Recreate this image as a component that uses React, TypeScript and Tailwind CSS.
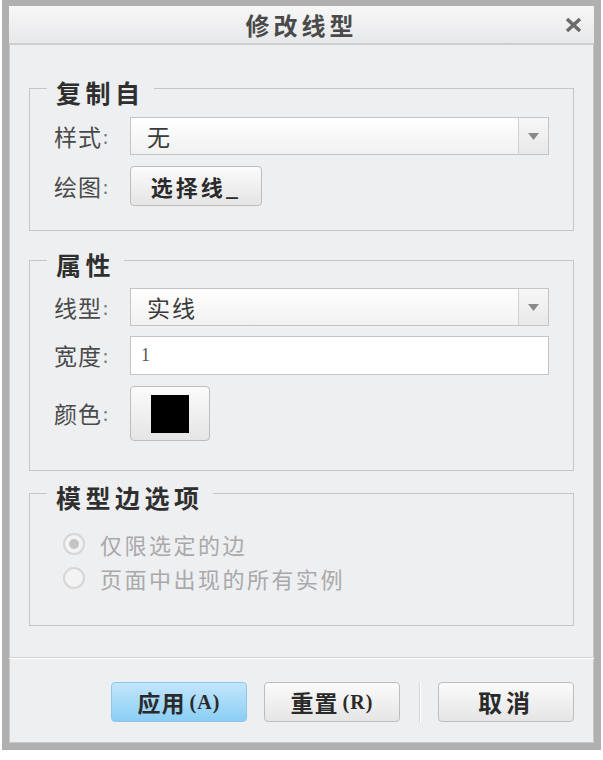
import React from "react";

const font = { fontFamily: '"Noto Sans CJK SC", "Noto Sans", sans-serif' };

function Combo({ value }: { value: string }) {
  return (
    <div className="flex h-[38px] flex-1 border border-[#c4c4c4] bg-gradient-to-b from-[#ffffff] to-[#f1f1f1]">
      <div className="flex flex-1 items-center pl-[16px] text-[23px] tracking-[2px] text-[#3a3a3a]">{value}</div>
      <div className="flex w-[30px] items-center justify-center border-l border-[#d0d0d0] bg-gradient-to-b from-[#f7f7f7] to-[#e8e8e8]">
        <svg width="11" height="7" viewBox="0 0 11 7">
          <path d="M0 0 H11 L5.5 7 Z" fill="#8a8a8a" />
        </svg>
      </div>
    </div>
  );
}

function Label({ children }: { children: React.ReactNode }) {
  return (
    <div className="flex w-[76px] shrink-0 items-center text-[23px] tracking-[1px] text-[#4a4a4a]">
      {children}
      <span className="ml-[1px] text-[18px] text-[#777]">:</span>
    </div>
  );
}

function Group({ title, children, className }: { title: string; children: React.ReactNode; className?: string }) {
  return (
    <fieldset className={"mx-[20px] border border-[#c6c6c6] pl-[24px] pr-[24px] " + (className ?? "")}>
      <legend className="-ml-[7px] px-[9px] pt-[8px] text-[25px] font-bold leading-[26px] tracking-[4.5px] text-[#2f2f2f]">{title}</legend>
      {children}
    </fieldset>
  );
}

function Radio({ checked, label }: { checked?: boolean; label: string }) {
  return (
    <div className="flex h-[34px] items-center">
      <div className="ml-[9px] flex h-[22px] w-[22px] items-center justify-center rounded-full border-2 border-[#d6d6d6] bg-[#f3f3f3]">
        {checked ? <div className="h-[10px] w-[10px] rounded-full bg-[#c4c4c4]" /> : null}
      </div>
      <div className="ml-[15px] text-[22px] tracking-[2.5px] text-[#a9a9a9]">{label}</div>
    </div>
  );
}

const grayBtn =
  "flex items-center justify-center rounded-[4px] border border-[#bdbdbd] bg-gradient-to-b from-[#fbfbfb] to-[#e5e5e5] font-bold text-[#2a2a2a]";

export default function App() {
  return (
    <div className="h-[760px] w-[603px] bg-white" style={font}>
      <div className="ml-[2px] flex h-[750px] w-[599px] flex-col border-[7px] border-t-[6px] border-[#b0b0b0] bg-[#eeeff1] shadow-[inset_0_0_0_1px_#c8c8c8]">
        {/* title bar */}
        <div className="relative flex h-[39px] shrink-0 items-center justify-center border-b-2 border-[#cfcfcf] bg-gradient-to-b from-[#f7f7f7] to-[#e7e8ea]">
          <div className="text-[24px] font-bold tracking-[4px] text-[#4a4a4a]">修改线型</div>
          <div className="absolute right-[12px] top-[11px]">
            <svg width="17" height="16" viewBox="0 0 17 16">
              <path d="M2 2 L15 14 M15 2 L2 14" stroke="#6a6a6a" strokeWidth="3.5" strokeLinecap="butt" />
            </svg>
          </div>
        </div>

        <div className="flex flex-1 flex-col">
          <Group title="复制自" className="mt-[26px] pb-[24px]">
            <div className="mt-[12px] flex items-center">
              <Label>样式</Label>
              <Combo value="无" />
            </div>
            <div className="mt-[11px] flex items-center">
              <Label>绘图</Label>
              <button className={grayBtn + " h-[40px] w-[132px] text-[22px] tracking-[3px]"}>选择线_</button>
            </div>
          </Group>

          <Group title="属性" className="mt-[12px] pb-[29px]">
            <div className="mt-[11px] flex items-center">
              <Label>线型</Label>
              <Combo value="实线" />
            </div>
            <div className="mt-[10px] flex items-center">
              <Label>宽度</Label>
              <div
                className="flex h-[39px] flex-1 items-center border border-[#c4c4c4] bg-white pl-[10px] text-[18px] text-[#555]"
                style={{ fontFamily: '"Liberation Serif", serif' }}
              >
                1
              </div>
            </div>
            <div className="mt-[11px] flex items-center">
              <Label>颜色</Label>
              <button className={grayBtn + " h-[55px] w-[80px]"}>
                <div className="h-[38px] w-[38px] bg-black" />
              </button>
            </div>
          </Group>

          <Group title="模型边选项" className="mt-[5px] pb-[30px]">
            <div className="mt-[17px]">
              <Radio checked label="仅限选定的边" />
              <Radio label="页面中出现的所有实例" />
            </div>
          </Group>

          <div className="mt-[31px] h-[2px] border-t border-[#d4d4d4] bg-white" />

          <div className="mt-[23px] flex items-center pl-[102px]">
            <button className="flex h-[40px] w-[136px] items-center justify-center rounded-[4px] border border-[#8fc6ea] bg-gradient-to-b from-[#c2e6fc] to-[#8bcef4] text-[23px] font-bold tracking-[1px] text-[#2a2a2a]">
              应用<span className="ml-[4px] text-[20px]" style={{ fontFamily: '"Liberation Serif", serif' }}>(A)</span>
            </button>
            <button className={grayBtn + " ml-[17px] h-[40px] w-[136px] text-[23px] tracking-[1px]"}>
              重置<span className="ml-[4px] text-[20px]" style={{ fontFamily: '"Liberation Serif", serif' }}>(R)</span>
            </button>
            <div className="ml-[19px] h-[40px] w-[2px] border-l border-[#d6d6d6] bg-white" />
            <button className={grayBtn + " ml-[17px] h-[40px] w-[136px] text-[24px] tracking-[4px]"}>取消</button>
          </div>
        </div>
      </div>
    </div>
  );
}
